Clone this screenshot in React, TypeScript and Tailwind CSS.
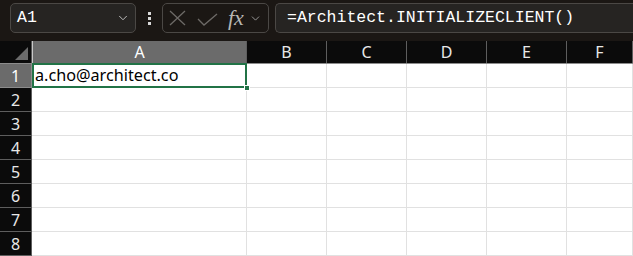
import { ChevronDown } from 'lucide-react';

const columns = [
  { name: 'A', width: 'w-[215px]' },
  { name: 'B', width: 'w-[80px]' },
  { name: 'C', width: 'w-[80px]' },
  { name: 'D', width: 'w-[80px]' },
  { name: 'E', width: 'w-[80px]' },
  { name: 'F', width: 'flex-1' },
];

const rows = [1, 2, 3, 4, 5, 6, 7, 8];

const uiFont = { fontFamily: '"Noto Sans", "Open Sans", sans-serif' };
const monoFont = { fontFamily: '"Liberation Mono", "DejaVu Sans Mono", monospace' };

export default function App() {
  return (
    <div className="w-[633px] h-[256px] overflow-hidden bg-white" style={uiFont}>
      {/* Formula bar */}
      <div className="h-[41px] bg-[#1b1714] flex items-start pt-[3px] pl-[10px]">
        <div className="w-[126px] h-[30px] rounded-[5px] border border-[#4b4845] bg-[#262422] flex items-center justify-between pl-[6px] pr-[5px]">
          <span className="text-[16.5px] text-white" style={monoFont}>A1</span>
          <ChevronDown className="w-[14px] h-[14px] text-[#d0d0d0]" strokeWidth={1.5} />
        </div>
        <div className="w-[26px] h-[30px] flex flex-col items-center justify-center gap-[2px]">
          <div className="w-[3px] h-[3px] bg-[#d8d8d8]" />
          <div className="w-[3px] h-[3px] bg-[#d8d8d8]" />
          <div className="w-[3px] h-[3px] bg-[#d8d8d8]" />
        </div>
        <div className="w-[107px] h-[30px] rounded-[5px] border border-[#4b4845] flex items-center pl-[6px]">
          <svg width="17" height="16" viewBox="0 0 17 16" className="text-[#6d6a67]">
            <path d="M1 1 L16 15 M16 1 L1 15" stroke="currentColor" strokeWidth="1.3" fill="none" />
          </svg>
          <svg width="21" height="13" viewBox="0 0 21 13" className="text-[#6d6a67] ml-[11px] mt-[2px]">
            <path d="M1 6 L7 12 L20 1" stroke="currentColor" strokeWidth="1.3" fill="none" />
          </svg>
          <span
            className="ml-[10px] text-[22px] italic text-[#b8b6b3] leading-none"
            style={{ fontFamily: '"Liberation Serif", "DejaVu Serif", serif' }}
          >
            fx
          </span>
          <ChevronDown className="w-[13px] h-[13px] text-[#b0b0b0] ml-[5px]" strokeWidth={1.5} />
        </div>
        <div className="ml-[6px] flex-1 h-[30px] rounded-l-[5px] border border-r-0 border-[#4b4845] bg-[#262422] flex items-center pl-[11px]">
          <span className="text-[16.5px] text-white" style={monoFont}>=Architect.INITIALIZECLIENT()</span>
        </div>
      </div>

      {/* Column headers */}
      <div className="flex h-[23px] bg-[#0b0b0b] border-b border-[#8c8c8c]">
        <div className="w-[32px] border-r border-[#555] relative">
          <div
            className="absolute right-[3px] bottom-[3px] w-[13px] h-[13px] bg-[#6b6b6b]"
            style={{ clipPath: 'polygon(100% 0, 100% 100%, 0 100%)' }}
          />
        </div>
        {columns.map((col) => (
          <div
            key={col.name}
            className={`${col.width} flex items-center justify-center text-[16px] border-r border-[#5e5e5e] ${
              col.name === 'A' ? 'bg-[#6b6b6b] text-white border-l border-l-[#c8c8c8]' : 'text-[#e8e8e8]'
            }`}
          >
            {col.name}
          </div>
        ))}
      </div>

      {/* Rows */}
      {rows.map((r) => (
        <div key={r} className="flex h-[24px]">
          <div
            className={`w-[32px] flex items-center justify-center text-[16px] border-b border-r ${
              r === 1 ? 'bg-[#6b6b6b] text-white border-[#8c8c8c]' : 'bg-[#0b0b0b] text-[#e8e8e8] border-[#5e5e5e]'
            }`}
          >
            {r}
          </div>
          {columns.map((col) => (
            <div
              key={col.name}
              className={`${col.width} border-b border-r border-[#e1e1e1] relative`}
            >
              {r === 1 && col.name === 'A' && (
                <>
                  <div className="absolute left-[0px] top-[-1px] right-[-1px] bottom-[-1px] border-2 border-[#217346] flex items-center pl-[1px] z-10">
                    <span className="text-[16.2px] text-black">a.cho@architect.co</span>
                  </div>
                  <div className="absolute right-[-4px] bottom-[-4px] w-[6px] h-[6px] bg-[#217346] border border-white z-20" />
                </>
              )}
            </div>
          ))}
        </div>
      ))}
    </div>
  );
}
